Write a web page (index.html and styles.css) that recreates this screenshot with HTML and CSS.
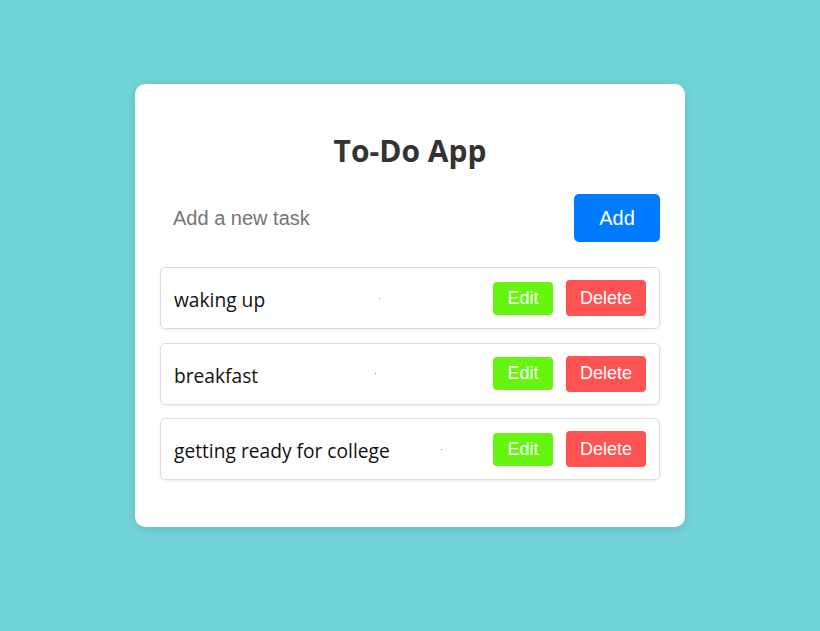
FILE: index.html
```html
<!DOCTYPE html>
<html lang="en">
<head>
<meta charset="utf-8">
<title>To-Do App</title>
<link rel="stylesheet" href="styles.css">
</head>
<body>
<div class="card">
  <h1 class="title">To-Do App</h1>
  <div class="add-row">
    <input class="task-input" type="text" placeholder="Add a new task">
    <button class="btn btn-add">Add</button>
  </div>
  <ul class="list">
    <li class="item">
      <span class="item-text">waking up</span>
      <span class="item-spacer"><span class="dot"></span></span>
      <button class="btn btn-edit">Edit</button>
      <button class="btn btn-delete">Delete</button>
    </li>
    <li class="item">
      <span class="item-text">breakfast</span>
      <span class="item-spacer"><span class="dot"></span></span>
      <button class="btn btn-edit">Edit</button>
      <button class="btn btn-delete">Delete</button>
    </li>
    <li class="item">
      <span class="item-text">getting ready for college</span>
      <span class="item-spacer"><span class="dot"></span></span>
      <button class="btn btn-edit">Edit</button>
      <button class="btn btn-delete">Delete</button>
    </li>
  </ul>
</div>
</body>
</html>
```
FILE: styles.css
```css
* { box-sizing: border-box; }
html, body { margin: 0; padding: 0; }
body {
  background: #72d3d8;
  font-family: "Liberation Sans", Arial, sans-serif;
  height: 631px;
  overflow: hidden;
}
.card {
  width: 550px;
  margin: 84px auto 0;
  background: #ffffff;
  border-radius: 10px;
  box-shadow: 0 2px 10px rgba(0, 0, 0, 0.12);
  padding: 49px 25px 47px;
}
.title {
  margin: 0;
  text-align: center;
  font-family: "Open Sans", "Noto Sans", sans-serif;
  font-weight: 700;
  font-size: 30px;
  line-height: 35px;
  color: #333333;
}
.add-row {
  display: flex;
  gap: 10px;
  margin-top: 26px;
  height: 48px;
}
.task-input {
  flex: 1;
  border: none;
  outline: none;
  padding: 0 13px;
  font-family: "Liberation Sans", Arial, sans-serif;
  font-size: 20px;
  color: #333;
  background: transparent;
}
.task-input::placeholder { color: #757575; }
.btn {
  border: none;
  color: #ffffff;
  font-family: "Liberation Sans", Arial, sans-serif;
  border-radius: 4px;
  padding: 0;
  cursor: pointer;
}
.btn-add {
  width: 86px;
  height: 48px;
  background: #007bff;
  font-size: 20px;
  border-radius: 5px;
}
.list {
  list-style: none;
  margin: 25px 0 0;
  padding: 0;
  display: flex;
  flex-direction: column;
  gap: 13.5px;
}
.item {
  display: flex;
  align-items: center;
  height: 62px;
  border: 1px solid #dddddd;
  border-radius: 5px;
  box-shadow: 0 1px 3px rgba(0, 0, 0, 0.08);
  padding: 0 13px 0 13px;
}
.item-text {
  font-family: "Open Sans", "Noto Sans", sans-serif;
  font-size: 19.2px;
  color: #111111;
  padding-top: 3px;
}
.item-spacer {
  flex: 1;
  display: flex;
  justify-content: center;
  align-items: center;
}
.dot {
  width: 1px;
  height: 1px;
  background: #888888;
}
.btn-edit {
  width: 60px;
  height: 33px;
  background: #66f50f;
  font-size: 18px;
  margin-right: 13px;
}
.btn-delete {
  width: 80px;
  height: 36px;
  background: #ff5252;
  font-size: 18px;
}
```
